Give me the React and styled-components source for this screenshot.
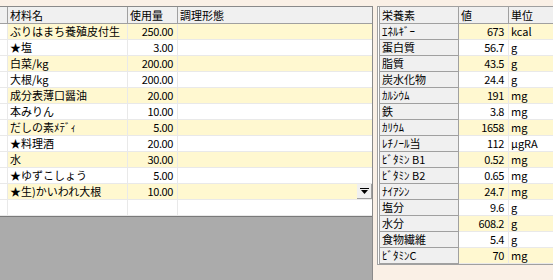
import React from 'react';
import styled, { createGlobalStyle } from 'styled-components';

const GlobalStyle = createGlobalStyle`
  html, body {
    margin: 0;
    padding: 0;
    background: #faf0e6;
  }
  body {
    font-family: "Noto Sans CJK JP", "Noto Sans", sans-serif;
    font-size: 11px;
    color: #000;
  }
`;

const Page = styled.div`
  display: flex;
  align-items: flex-start;
  gap: 4px;
  width: 553px;
  height: 274px;
  padding-top: 6px;
  overflow: hidden;
`;

const LeftPanel = styled.div`
  display: flex;
  flex-direction: column;
  flex: none;
  width: 372px;
  height: 273px;
  border-top: 1px solid #8a8a8a;
  border-right: 1px solid #8a8a8a;
  background: #fff;
`;

const Grid = styled.div`
  display: grid;
  grid-template-columns: 8px 120px 50px 194px;
  grid-auto-rows: 16px;
  grid-template-rows: 17px;
`;

const HeadCell = styled.div`
  box-sizing: border-box;
  background: #f0f0f0;
  border-bottom: 1px solid #a0a0a0;
  border-right: ${p => (p.$last ? 'none' : '1px solid #a0a0a0')};
  padding-left: 2px;
  line-height: 16px;
  white-space: nowrap;
  overflow: hidden;
`;

const Cell = styled.div`
  box-sizing: border-box;
  position: relative;
  background: ${p => (p.$odd ? '#fff8d0' : '#fff')};
  border-bottom: 1px solid #e9e9e9;
  border-right: ${p => (p.$last ? 'none' : '1px solid #e9e9e9')};
  padding: 0 ${p => (p.$num ? '4px' : '2px')};
  text-align: ${p => (p.$num ? 'right' : 'left')};
  letter-spacing: ${p => (p.$num ? '-0.4px' : '0')};
  line-height: 15px;
  white-space: nowrap;
  overflow: hidden;
`;

const DropButton = styled.div`
  position: absolute;
  right: 0;
  top: 0;
  width: 15px;
  height: 15px;
  box-sizing: border-box;
  background: #f0f0f0;
  border-right: 1px solid #a0a0a0;
  border-bottom: 1px solid #a0a0a0;
  display: flex;
  align-items: center;
  justify-content: center;
`;

const Workspace = styled.div`
  flex: 1;
  background: #ababab;
  border-top: 1px solid #7a7a7a;
`;

const RightPanel = styled.div`
  flex: none;
  border: 1px solid #a0a0a0;
  border-right: none;
  padding-left: 1px;
  background: #fff;
`;

const NutriGrid = styled.div`
  display: grid;
  grid-template-columns: 80px 50px 60px;
  grid-template-rows: 17px;
  grid-auto-rows: 16px;
`;

const NameCell = styled.div`
  box-sizing: border-box;
  background: #f0f0f0;
  border-left: 1px solid #a0a0a0;
  border-right: 1px solid #a0a0a0;
  border-bottom: 1px solid #a0a0a0;
  padding-left: 2px;
  line-height: 15px;
  white-space: nowrap;
  overflow: hidden;
`;

const NutriHead = styled(HeadCell)`
  border-left: ${p => (p.$first ? '1px solid #a0a0a0' : 'none')};
`;

const ingredients = [
  ['ぶりはまち養殖皮付生', '250.00'],
  ['★塩', '3.00'],
  ['白菜/kg', '200.00'],
  ['大根/kg', '200.00'],
  ['成分表薄口醤油', '20.00'],
  ['本みりん', '10.00'],
  ['だしの素ﾒﾃﾞｨ', '5.00'],
  ['★料理酒', '20.00'],
  ['水', '30.00'],
  ['★ゆずこしょう', '5.00'],
  ['★生)かいわれ大根', '10.00'],
  ['', ''],
];

const nutrients = [
  ['ｴﾈﾙｷﾞｰ', '673', 'kcal'],
  ['蛋白質', '56.7', 'g'],
  ['脂質', '43.5', 'g'],
  ['炭水化物', '24.4', 'g'],
  ['ｶﾙｼｳﾑ', '191', 'mg'],
  ['鉄', '3.8', 'mg'],
  ['ｶﾘｳﾑ', '1658', 'mg'],
  ['ﾚﾁﾉｰﾙ当', '112', 'μgRA'],
  ['ﾋﾞﾀﾐﾝ B1', '0.52', 'mg'],
  ['ﾋﾞﾀﾐﾝ B2', '0.65', 'mg'],
  ['ﾅｲｱｼﾝ', '24.7', 'mg'],
  ['塩分', '9.6', 'g'],
  ['水分', '608.2', 'g'],
  ['食物繊維', '5.4', 'g'],
  ['ﾋﾞﾀﾐﾝC', '70', 'mg'],
];

const Arrow = () => (
  <svg width="9" height="6" viewBox="0 0 9 6">
    <rect x="0" y="0" width="9" height="1" fill="#000" />
    <polygon points="1,2 8,2 4.5,6" fill="#000" />
  </svg>
);

const App = () => {
  return (
    <>
      <GlobalStyle />
      <Page>
        <LeftPanel>
          <Grid>
            <HeadCell />
            <HeadCell>材料名</HeadCell>
            <HeadCell>使用量</HeadCell>
            <HeadCell $last>調理形態</HeadCell>
            {ingredients.map(([name, qty], i) => {
              const odd = i % 2 === 0 && name !== '';
              return (
                <React.Fragment key={i}>
                  <Cell />
                  <Cell $odd={odd}>{name}</Cell>
                  <Cell $odd={odd} $num>{qty}</Cell>
                  <Cell $odd={odd} $last>
                    {i === 10 && (
                      <DropButton>
                        <Arrow />
                      </DropButton>
                    )}
                  </Cell>
                </React.Fragment>
              );
            })}
          </Grid>
          <Workspace />
        </LeftPanel>
        <RightPanel>
          <NutriGrid>
            <NutriHead $first>栄養素</NutriHead>
            <NutriHead>値</NutriHead>
            <NutriHead $last>単位</NutriHead>
            {nutrients.map(([name, val, unit], i) => (
              <React.Fragment key={name}>
                <NameCell>{name}</NameCell>
                <Cell $odd={i % 2 === 0} $num>{val}</Cell>
                <Cell $odd={i % 2 === 0} $last>{unit}</Cell>
              </React.Fragment>
            ))}
          </NutriGrid>
        </RightPanel>
      </Page>
    </>
  );
};

export default App;
